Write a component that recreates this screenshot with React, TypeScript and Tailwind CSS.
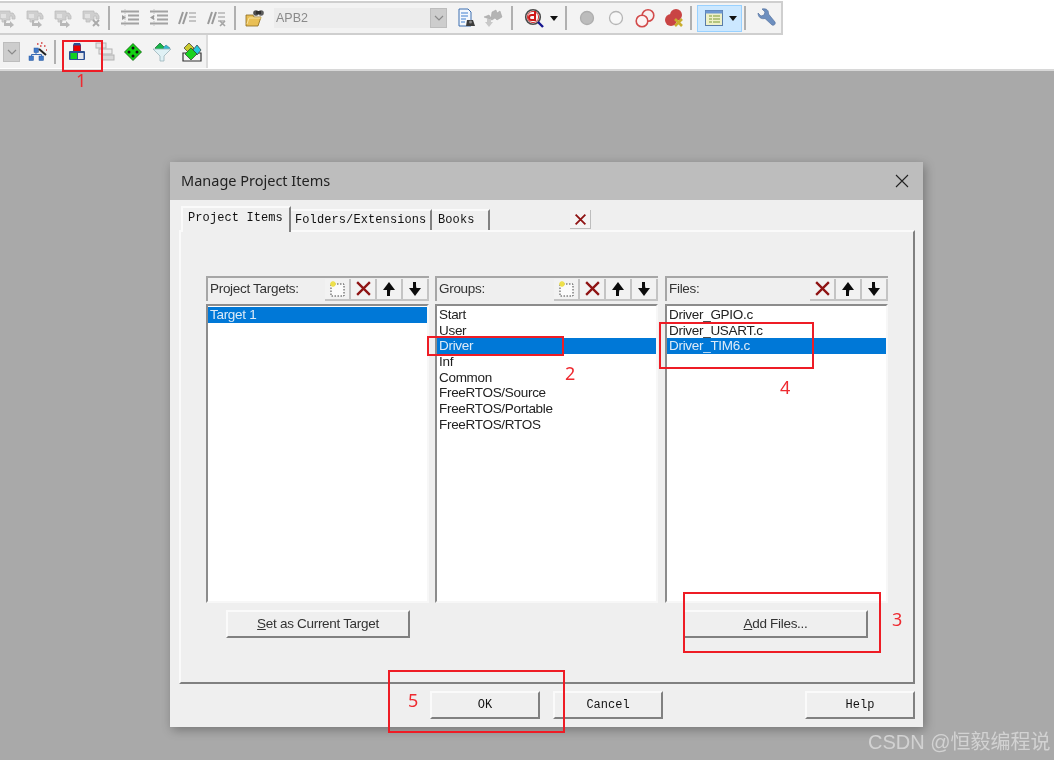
const Sep = ({ className = "" }: { className?: string }) => (
  <div className={`w-[2px] h-[24px] bg-[#b0b0b0] shrink-0 ${className}`} />
);

const Caret = ({ className = "" }: { className?: string }) => (
  <svg viewBox="0 0 8 5" className={`w-[8px] h-[5px] shrink-0 ${className}`}>
    <path d="M0 0h8L4 5z" fill="#111" />
  </svg>
);

const Ico = ({ children, className = "" }: { children: React.ReactNode; className?: string }) => (
  <svg viewBox="0 0 20 20" className={`w-[20px] h-[20px] shrink-0 ${className}`}>
    {children}
  </svg>
);

const GrayStep = ({ className = "", mark = false }: { className?: string; mark?: boolean }) => (
  <Ico className={className}>
    <path d="M2 3h11v2h3l2 3v3h-3V8h-2v4H9v2H5v-3H2z" fill="#cfcfcf" stroke="#bcbcbc" strokeWidth=".8" />
    <path d="M4 6h5v4H4z" fill="#e2e2e2" />
    {mark ? (
      <path d="M12 12l6 6M18 12l-6 6" stroke="#aaa" strokeWidth="2" />
    ) : (
      <path d="M9 12v3h4v-2l4 4-4 3v-2H7v-6z" fill="#b8b8b8" />
    )}
  </Ico>
);

const IndentIco = ({ className = "", flip = false }: { className?: string; flip?: boolean }) => (
  <Ico className={className}>
    <path d="M1 3.500h18M8 7.500h11M8 11.500h11M1 15.500h18" stroke="#a2a2a2" strokeWidth="1.800" />
    <path d="M5 1v18" stroke="#c4c4c4" strokeWidth="1" strokeDasharray="2 1" />
    <path d={flip ? "M1 9.500l4-2.500v5z" : "M6 9.500L2 7v5z"} fill="#9a9a9a" />
  </Ico>
);

const SlashIco = ({ className = "", mark = false }: { className?: string; mark?: boolean }) => (
  <Ico className={className}>
    <path d="M5 4L1 16M9 4L5 16" stroke="#9a9a9a" strokeWidth="2" />
    <path d="M11 5h7M11 9h7M11 13h7" stroke="#b5b5b5" strokeWidth="1.400" />
    {mark && <path d="M13 13l5 5M18 13l-5 5" stroke="#a5a5a5" strokeWidth="1.600" />}
  </Ico>
);

const FolderBinoc = ({ className = "" }: { className?: string }) => (
  <Ico className={className}>
    <path d="M1 7h7l1 2h7l-3 9H1z" fill="#e9bf55" stroke="#8a6a20" strokeWidth=".8" />
    <path d="M2 16l2-6h13" fill="none" stroke="#f7e3a0" strokeWidth="1" />
    <circle cx="11" cy="5" r="2.800" fill="#4d4d4d" />
    <circle cx="16" cy="5" r="2.800" fill="#5c5c5c" />
    <path d="M11 3h5v3h-5z" fill="#2f2f2f" />
  </Ico>
);

const DocIco = ({ className = "" }: { className?: string }) => (
  <Ico className={className}>
    <path d="M3 1h9l3 3v14H3z" fill="#f4f8fd" stroke="#3d6fb0" strokeWidth="1" />
    <path d="M5 5h7M5 8h7M5 11h5M5 14h4" stroke="#3f7fd0" strokeWidth="1.200" />
    <path d="M11 12h6l2 6h-9z" fill="#3c3c3c" />
    <circle cx="14.500" cy="14" r="1.500" fill="#8a8a8a" />
  </Ico>
);

const BinocGray = ({ className = "" }: { className?: string }) => (
  <Ico className={className}>
    <path d="M1 9l5-2 2 3 1-6 4-2 1 3 3-2 2 6-5 3-2-2-3 2z" fill="#b4b4b4" stroke="#a0a0a0" strokeWidth=".5" />
    <path d="M4 11h4v3h2l-4 5-4-5h2z" fill="#c8c8c8" />
  </Ico>
);

const Debug = ({ className = "" }: { className?: string }) => (
  <Ico className={className}>
    <circle cx="9" cy="9" r="7.300" fill="#f6f6f6" stroke="#4a4a4a" strokeWidth="1.600" />
    <circle cx="9" cy="9" r="5.600" fill="none" stroke="#d23b3b" strokeWidth="1" />
    <path d="M11 3v9H7.500a2.500 2.500 0 1 1 0-5H11" fill="none" stroke="#d01818" strokeWidth="2" />
    <path d="M14 14l5 5" stroke="#15158f" strokeWidth="2.400" />
  </Ico>
);

const Dot = ({ className = "", hollow = false }: { className?: string; hollow?: boolean }) => (
  <Ico className={className}>
    <circle cx="10" cy="10" r="6.500" fill={hollow ? "#f7f7f7" : "#bcbcbc"} stroke={hollow ? "#b5b5b5" : "#adadad"} strokeWidth="1.300" />
  </Ico>
);

const RingPair = ({ className = "" }: { className?: string }) => (
  <Ico className={className}>
    <circle cx="13" cy="7.500" r="5.800" fill="#f7f0f0" stroke="#d24a4a" strokeWidth="1.600" />
    <circle cx="7" cy="13" r="5.800" fill="#fbf3f3" stroke="#d24a4a" strokeWidth="1.600" />
  </Ico>
);

const RedBlob = ({ className = "" }: { className?: string }) => (
  <Ico className={className}>
    <circle cx="12" cy="7" r="6" fill="#c94444" />
    <circle cx="7" cy="12" r="6" fill="#c94444" />
    <path d="M11 11l7 7M18 11l-7 7" stroke="#c9ad2e" strokeWidth="2.600" />
  </Ico>
);

const WindowIco = ({ className = "" }: { className?: string }) => (
  <Ico className={className}>
    <rect x="1.500" y="2.500" width="17" height="15" fill="#eef0c8" stroke="#5a7ca8" strokeWidth="1" />
    <rect x="1.500" y="2.500" width="17" height="3" fill="#6d97d2" />
    <path d="M5 8h3M5 11h3M5 14h3M9 8h7M9 11h7M9 14h7" stroke="#7b9a35" strokeWidth="1.200" />
  </Ico>
);

const Wrench = ({ className = "" }: { className?: string }) => (
  <Ico className={className}>
    <path d="M2 5l3 3 3-1 1-3-3-3c4-1 7 1 6.500 5L19 14c1 2-1 4-3 3l-7-6.500C5 11.500 2 9 2 5z" fill="#6d8fbf" stroke="#4b6a98" strokeWidth=".6" />
  </Ico>
);

const Wizard = ({ className = "" }: { className?: string }) => (
  <Ico className={className}>
    <g fill="#3f78c8" stroke="#2b5a9e" strokeWidth=".5">
      <rect x="6" y="6" width="4.500" height="4.500" />
      <rect x="1" y="14" width="4.500" height="4.500" />
      <rect x="11" y="14" width="4.500" height="4.500" />
    </g>
    <path d="M8 10v2.500M3.500 14v-1.500h10V14" stroke="#3a6cb5" fill="none" />
    <path d="M11 7l7 6" stroke="#222" strokeWidth="2" />
    <path d="M9 2h1.500M13 1h1.500M16 4h1.500M12 4h1.500M18 8h1" stroke="#d43a3a" strokeWidth="1.300" />
  </Ico>
);

const Blocks = ({ className = "" }: { className?: string }) => (
  <Ico className={className}>
    <path d="M6 3l1-2h6l1 2v6H6z" fill="#2a4f93" />
    <rect x="6.500" y="3.500" width="7" height="5.500" fill="#e80000" />
    <rect x="2" y="9" width="16" height="9" rx="1" fill="#2a4f93" />
    <rect x="3.500" y="11" width="6.500" height="6" fill="#10d020" />
    <rect x="11" y="11" width="5.500" height="6" fill="#e4e6ea" />
  </Ico>
);

const GrayStack = ({ className = "" }: { className?: string }) => (
  <Ico className={className}>
    <rect x="1" y="1" width="10" height="5" fill="#e5e5e5" stroke="#b3b3b3" />
    <rect x="4" y="7" width="13" height="5" fill="#ececec" stroke="#b3b3b3" />
    <rect x="7" y="13" width="12" height="5" fill="#d8d8d8" stroke="#b3b3b3" />
  </Ico>
);

const Dice = ({ className = "" }: { className?: string }) => (
  <Ico className={className}>
    <path d="M10 1.500L18.500 10 10 18.500 1.500 10z" fill="#12d212" stroke="#0c5a0c" strokeWidth=".8" />
    <g fill="#111">
      <circle cx="10" cy="6" r="1.500" />
      <circle cx="6" cy="10" r="1.500" />
      <circle cx="14" cy="10" r="1.500" />
      <circle cx="10" cy="14" r="1.500" />
    </g>
  </Ico>
);

const Funnel = ({ className = "" }: { className?: string }) => (
  <Ico className={className}>
    <path d="M8 1l5 5-3 2H5L3 6z" fill="#17b54a" stroke="#14602c" strokeWidth=".7" />
    <path d="M14 3l4 3-2 2h-4l-1-2z" fill="#35b8d0" stroke="#2c7280" strokeWidth=".5" />
    <path d="M1 7h18l-7 7v5H8v-5z" fill="#dff1f5" stroke="#9ab4ba" strokeWidth=".8" />
  </Ico>
);

const Books = ({ className = "" }: { className?: string }) => (
  <Ico className={className}>
    <path d="M1 11h18v8H1z" fill="#f2f2f2" stroke="#333" strokeWidth="1.200" />
    <path d="M7 1l5 5-5 5-5-5z" fill="#c9c92e" stroke="#333" strokeWidth=".7" />
    <path d="M15 3l4 5-4 5-4-5z" fill="#24c9dc" stroke="#333" strokeWidth=".7" />
    <path d="M9 6l6 6-6 6-6-6z" fill="#19d21f" stroke="#333" strokeWidth=".7" />
  </Ico>
);

const DownBox = ({ className = "" }: { className?: string }) => (
  <div className={`flex items-center justify-center bg-[#cdcdcd] border border-[#bdbdbd] shrink-0 ${className}`}>
    <svg viewBox="0 0 10 6" className="w-[10px] h-[6px]">
      <path d="M1 1l4 4 4-4" fill="none" stroke="#8a8a8a" strokeWidth="1.200" />
    </svg>
  </div>
);

const XGlyph = ({ className = "" }: { className?: string }) => (
  <svg viewBox="0 0 16 16" className={`shrink-0 ${className}`}>
    <path d="M2 2l12 12M14 2L2 14" stroke="#8f1414" strokeWidth="2.200" />
  </svg>
);

const ArrowGlyph = ({ down = false }: { down?: boolean }) => (
  <svg viewBox="0 0 16 16" className="w-[16px] h-[16px]">
    <path d={down ? "M6 1h3c0 3 0 5 .5 6H14l-6 8-6-8h4z" : "M6 15h3c0-3 0-5 .5-6H14L8 1 2 9h4z"} fill="#0c0c0c" />
  </svg>
);

const NewGlyph = () => (
  <svg viewBox="0 0 18 18" className="w-[18px] h-[18px]">
    <rect x="3" y="4" width="13" height="12" fill="#fbfbfb" stroke="#444" strokeWidth="1" strokeDasharray="1.500 1.500" />
    <path d="M5 1v6M2 4h6M3 2l4 4M7 2L3 6" stroke="#eee04a" strokeWidth="1.400" />
  </svg>
);

const MiniBtn = ({ children }: { children: React.ReactNode }) => (
  <div className="w-[26px] h-[22px] flex items-center justify-center bg-[#f2f2f2] border-r-2 border-b-2 border-[#c4c4c4] shrink-0">
    {children}
  </div>
);

const Pane = ({
  label,
  rows,
  selected,
  controls,
  className = "",
}: {
  label: string;
  rows: string[];
  selected: string;
  controls: React.ReactNode;
  className?: string;
}) => (
  <div className={`w-[223px] flex flex-col gap-[3px] shrink-0 ${className}`}>
    <div className="h-[25px] flex items-center justify-between border-t-2 border-l-2 border-[#a6a6a6] pl-[2px]">
      <span className="text-[13.500px] tracking-[-0.3px] text-[#333]">{label}</span>
      <div className="flex">{controls}</div>
    </div>
    <div className="h-[299px] bg-white border-t-2 border-l-2 border-[#8c8c8c] border-r-2 border-b-2 border-r-[#f7f7f7] border-b-[#f7f7f7] pt-[1px]">
      {rows.map((row) => (
        <div
          key={row}
          className={`h-[15.700px] leading-[15.700px] pl-[2px] text-[13.500px] tracking-[-0.3px] ${
            row === selected ? "bg-[#0078d7] text-[#dcebf8]" : "text-[#222]"
          }`}
        >
          {row}
        </div>
      ))}
    </div>
  </div>
);

const RaisedBtn = ({ children, className = "" }: { children: React.ReactNode; className?: string }) => (
  <div
    className={`h-[28px] flex items-center justify-center bg-[#efefef] border-t-2 border-l-2 border-r-2 border-b-2 border-t-[#fafafa] border-l-[#fafafa] border-r-[#808080] border-b-[#808080] shrink-0 ${className}`}
  >
    {children}
  </div>
);

const Mark = ({ className }: { className: string }) => (
  <div className={`absolute border-2 border-[#ee1c25] ${className}`} />
);

const Num = ({ children, className }: { children: React.ReactNode; className: string }) => (
  <span className={`absolute text-[18px] leading-none text-[#ee2a30] font-['Noto_Sans',sans-serif] ${className}`}>
    {children}
  </span>
);

export default function App() {
  return (
    <div className="relative w-[1054px] h-[760px] overflow-hidden bg-white font-['Liberation_Sans',sans-serif] blur-[0.4px]">
      <header className="h-[69px] bg-white">
        <div className="pt-[1px]">
          <div className="w-[783px] h-[34px] flex items-center bg-[#f3f3f3] border-t-2 border-r-2 border-b-2 border-[#cfcfcf]">
            <div className="flex items-center gap-[8px] ml-[-3px]">
              <GrayStep />
              <GrayStep />
              <GrayStep />
              <GrayStep mark />
            </div>
            <Sep className="ml-[7px]" />
            <div className="flex items-center gap-[9px] ml-[10px]">
              <IndentIco />
              <IndentIco flip />
              <SlashIco />
              <SlashIco mark />
            </div>
            <Sep className="ml-[7px]" />
            <FolderBinoc className="ml-[9px]" />
            <div className="ml-[9px] w-[173px] h-[20px] flex justify-between bg-[#ececec]">
              <span className="pl-[2px] text-[12.500px] leading-[20px] text-[#8a8a8a]">APB2</span>
              <DownBox className="w-[17px] h-[20px]" />
            </div>
            <DocIco className="ml-[9px]" />
            <BinocGray className="ml-[7px]" />
            <Sep className="ml-[8px]" />
            <Debug className="ml-[11px]" />
            <Caret className="ml-[6px]" />
            <Sep className="ml-[7px]" />
            <div className="flex items-center gap-[9px] ml-[10px]">
              <Dot />
              <Dot hollow />
              <RingPair />
              <RedBlob />
            </div>
            <Sep className="ml-[6px]" />
            <div className="ml-[5px] w-[45px] h-[27px] flex items-center bg-[#cce8ff] border border-[#99d1ff] pl-[6px]">
              <WindowIco />
              <Caret className="ml-[5px]" />
            </div>
            <Sep className="ml-[2px]" />
            <Wrench className="ml-[10px]" />
          </div>
          <div className="w-[208px] h-[33px] flex items-center bg-[#f3f3f3] border-r-2 border-[#dcdcdc]">
            <DownBox className="ml-[3px] w-[17px] h-[20px]" />
            <Wizard className="ml-[8px]" />
            <Sep className="ml-[6px]" />
            <div className="flex items-center gap-[8px] ml-[11px]">
              <Blocks />
              <GrayStack />
              <Dice />
              <Funnel className="ml-[1px]" />
              <Books className="ml-[2px]" />
            </div>
          </div>
        </div>
      </header>

      <main className="h-[691px] bg-[#a9a9a9] border-t-2 border-[#d8d8d8] pl-[170px] pt-[91px]">
        <section className="w-[753px] h-[565px] flex flex-col bg-[#efefef] shadow-[2px_3px_10px_rgba(0,0,0,0.3)]">
          <div className="h-[38px] flex items-center justify-between bg-[#bdbdbd] pl-[11px] pr-[14px] shrink-0">
            <span className="font-['Noto_Sans',sans-serif] text-[14.500px] text-[#222]">Manage Project Items</span>
            <svg viewBox="0 0 14 14" className="w-[14px] h-[14px]">
              <path d="M1 1l12 12M13 1L1 13" stroke="#222" strokeWidth="1.100" />
            </svg>
          </div>

          <div className="pl-[9px] pr-[8px] flex-1 flex flex-col">
            <div className="h-[30px] flex items-end font-['Liberation_Mono',monospace] text-[12px] text-[#111] pl-[2px]">
              <div className="relative z-10 w-[110px] h-[26px] mb-[-2px] pl-[5px] pt-[3px] bg-[#efefef] border-t-2 border-l-2 border-r-2 border-t-[#fafafa] border-l-[#fafafa] border-r-[#808080] leading-[14px] tracking-[0.1px]">
                Project Items
              </div>
              <div className="w-[141px] h-[21px] pl-[4px] pt-[2px] border-t-2 border-r-2 border-t-[#fafafa] border-r-[#808080] leading-[14px] tracking-[0.1px]">
                Folders/Extensions
              </div>
              <div className="w-[58px] h-[21px] pl-[6px] pt-[2px] border-t-2 border-r-2 border-t-[#fafafa] border-r-[#808080] leading-[14px] tracking-[0.1px]">
                Books
              </div>
              <div className="ml-[80px] mb-[1px] w-[21px] h-[19px] flex items-center justify-center bg-[#f4f4f4] border-r border-b border-[#bdbdbd]">
                <XGlyph className="w-[13px] h-[13px]" />
              </div>
            </div>

            <div className="w-[736px] h-[454px] border-t-2 border-l-2 border-[#fafafa] border-r-2 border-b-2 border-r-[#808080] border-b-[#808080] pl-[25px] pt-[44px]">
              <div className="flex gap-[6px]">
                <Pane
                  label="Project Targets:"
                  rows={["Target 1"]}
                  selected="Target 1"
                  controls={
                    <>
                      <MiniBtn><NewGlyph /></MiniBtn>
                      <MiniBtn><XGlyph className="w-[17px] h-[17px]" /></MiniBtn>
                      <MiniBtn><ArrowGlyph /></MiniBtn>
                      <MiniBtn><ArrowGlyph down /></MiniBtn>
                    </>
                  }
                />
                <Pane
                  label="Groups:"
                  rows={[
                    "Start",
                    "User",
                    "Driver",
                    "Inf",
                    "Common",
                    "FreeRTOS/Source",
                    "FreeRTOS/Portable",
                    "FreeRTOS/RTOS",
                  ]}
                  selected="Driver"
                  controls={
                    <>
                      <MiniBtn><NewGlyph /></MiniBtn>
                      <MiniBtn><XGlyph className="w-[17px] h-[17px]" /></MiniBtn>
                      <MiniBtn><ArrowGlyph /></MiniBtn>
                      <MiniBtn><ArrowGlyph down /></MiniBtn>
                    </>
                  }
                />
                <Pane
                  label="Files:"
                  className="ml-[1px]"
                  rows={["Driver_GPIO.c", "Driver_USART.c", "Driver_TIM6.c"]}
                  selected="Driver_TIM6.c"
                  controls={
                    <>
                      <MiniBtn><XGlyph className="w-[17px] h-[17px]" /></MiniBtn>
                      <MiniBtn><ArrowGlyph /></MiniBtn>
                      <MiniBtn><ArrowGlyph down /></MiniBtn>
                    </>
                  }
                />
              </div>
              <div className="flex mt-[7px] text-[13.500px] tracking-[-0.3px] text-[#333]">
                <RaisedBtn className="ml-[20px] w-[184px]">
                  <span><u>S</u>et as Current Target</span>
                </RaisedBtn>
                <RaisedBtn className="ml-[273px] w-[185px]">
                  <span><u>A</u>dd Files...</span>
                </RaisedBtn>
              </div>
            </div>

            <div className="flex pt-[7px] font-['Liberation_Mono',monospace] text-[12px] text-[#111]">
              <RaisedBtn className="ml-[251px] w-[110px]">OK</RaisedBtn>
              <RaisedBtn className="ml-[13px] w-[110px]">Cancel</RaisedBtn>
              <RaisedBtn className="ml-[142px] w-[110px]">Help</RaisedBtn>
            </div>
          </div>
        </section>
      </main>

      <Mark className="left-[62px] top-[40px] w-[41px] h-[32px]" />
      <Mark className="left-[427px] top-[336px] w-[137px] h-[20px]" />
      <Mark className="left-[659px] top-[322px] w-[155px] h-[47px]" />
      <Mark className="left-[683px] top-[592px] w-[198px] h-[61px]" />
      <Mark className="left-[388px] top-[670px] w-[177px] h-[63px]" />
      <Num className="left-[76px] top-[71px]">1</Num>
      <Num className="left-[565px] top-[364px]">2</Num>
      <Num className="left-[892px] top-[610px]">3</Num>
      <Num className="left-[780px] top-[378px]">4</Num>
      <Num className="left-[408px] top-[691px]">5</Num>
      <span className="absolute left-[868px] top-[731px] text-[20px] leading-[22px] text-[#d2d2d2] font-['Liberation_Sans','Noto_Sans_CJK_SC',sans-serif]">
        CSDN @恒毅编程说
      </span>
    </div>
  );
}
